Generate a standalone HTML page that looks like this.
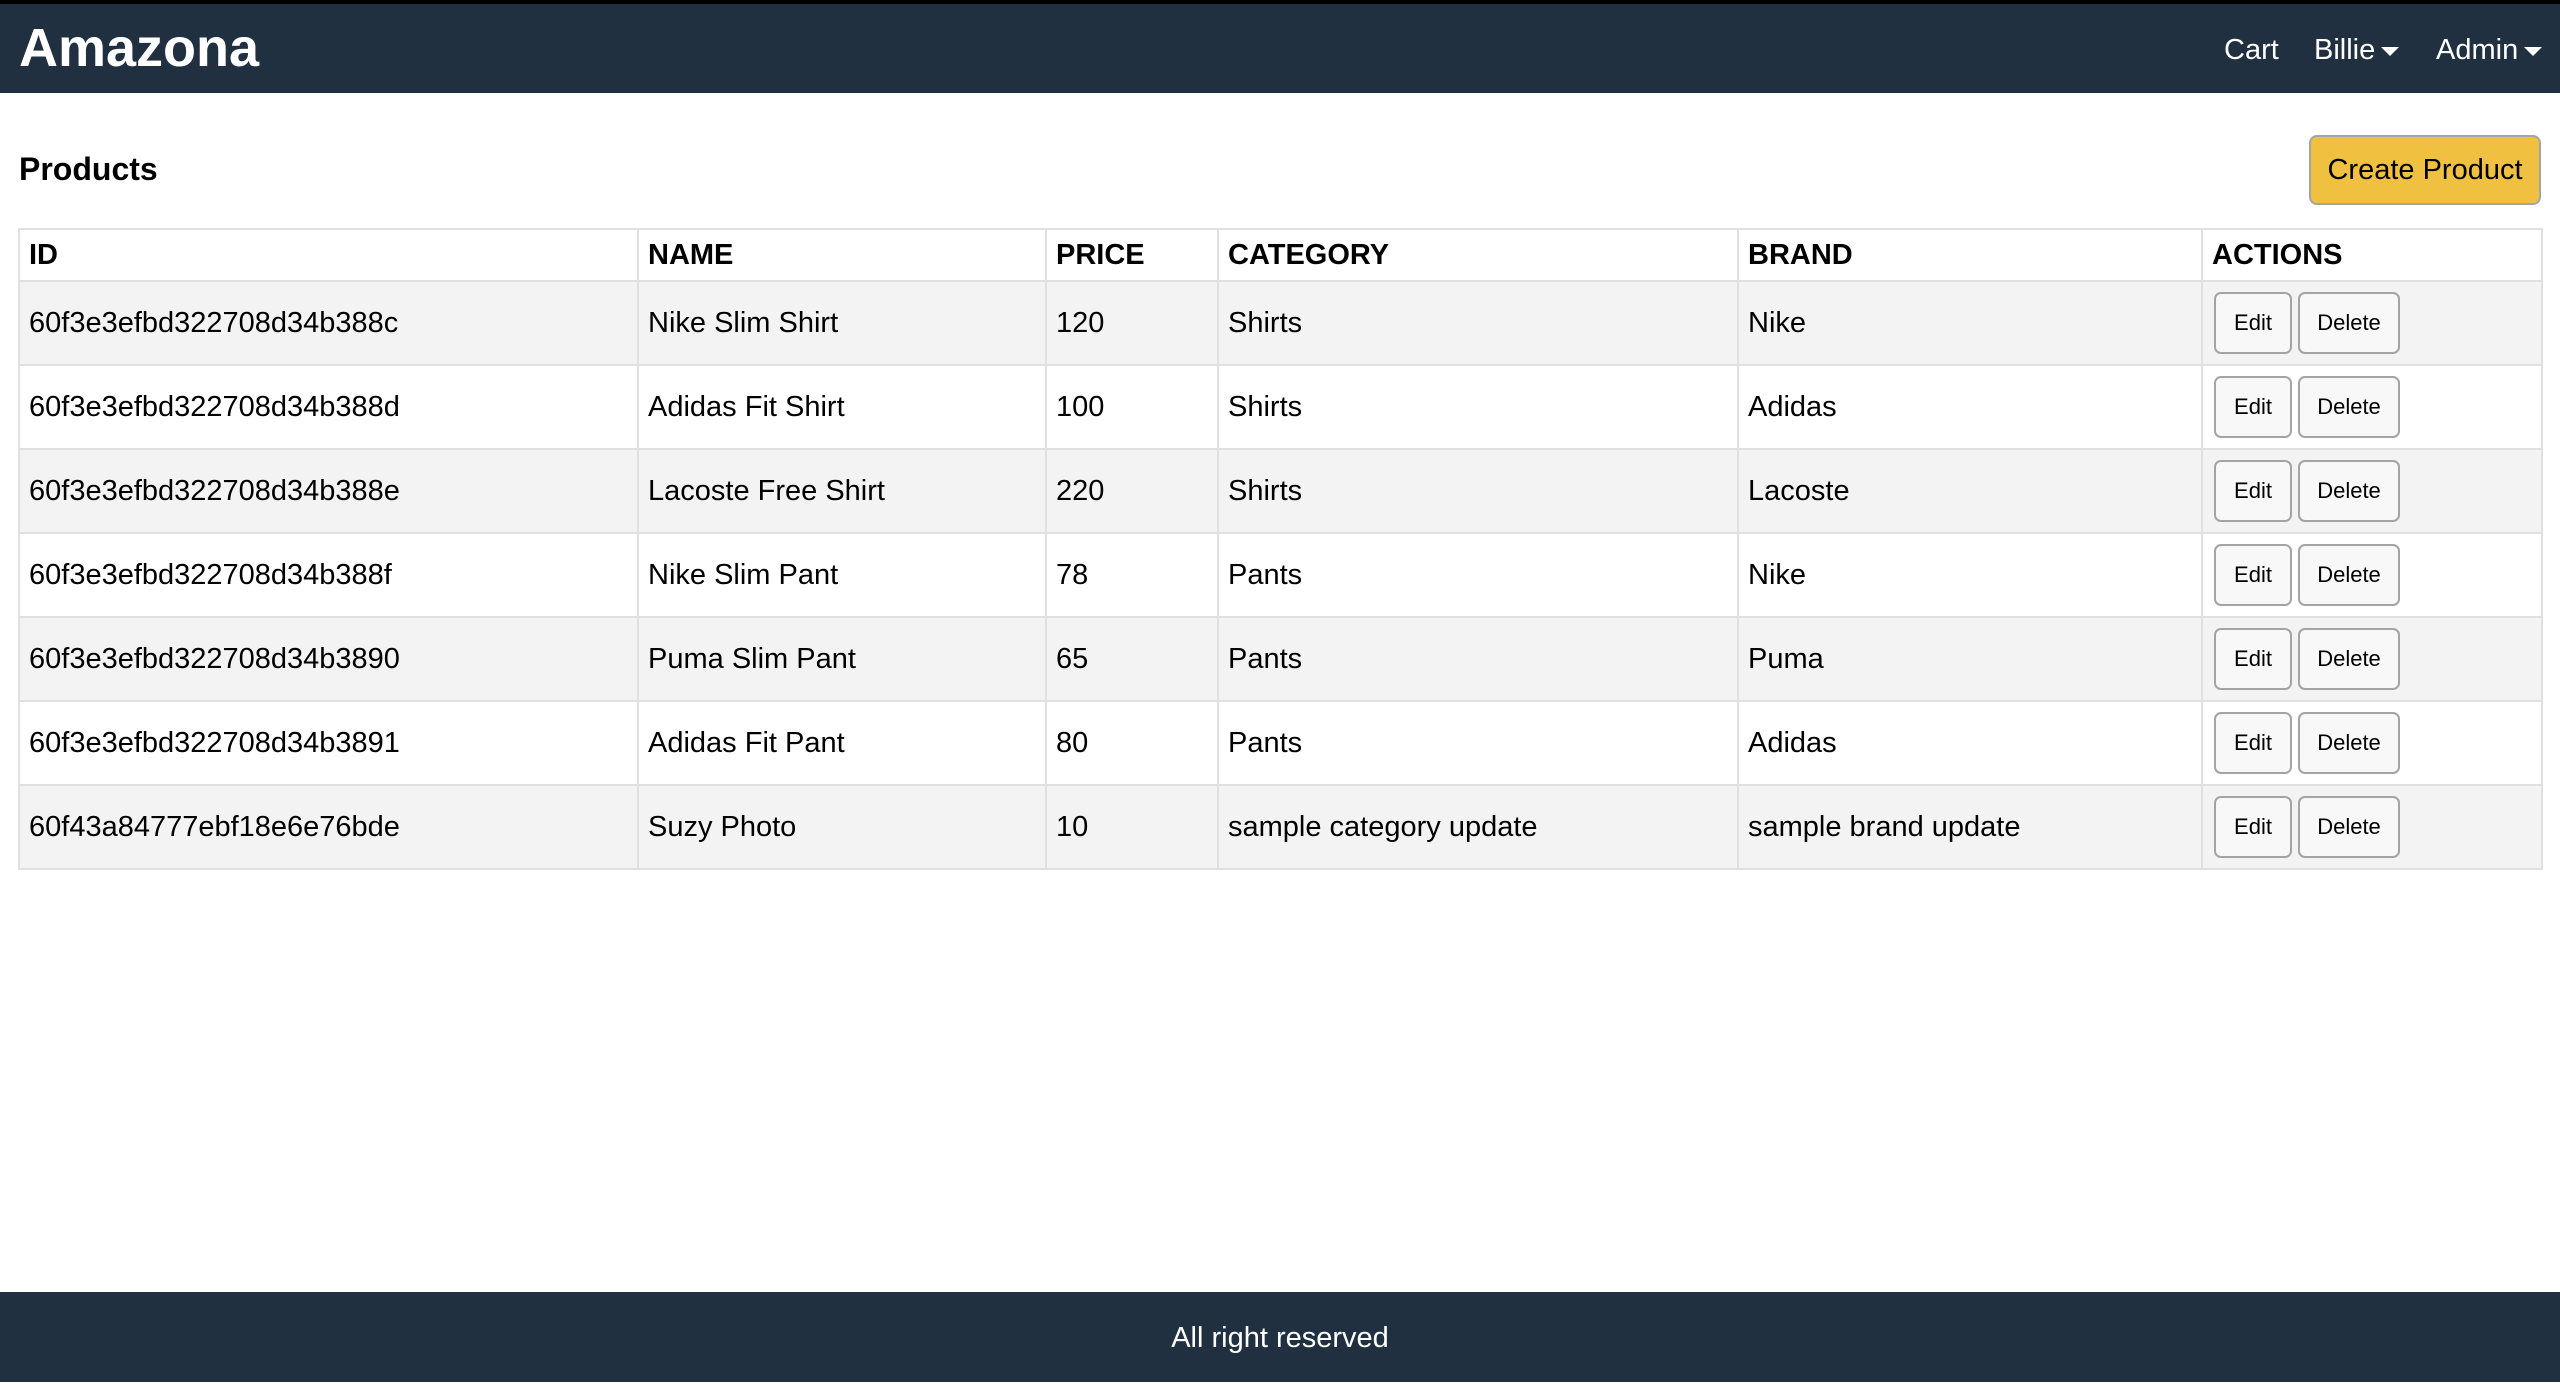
<!DOCTYPE html>
<html><head><meta charset="utf-8"><style>
*{box-sizing:border-box;margin:0;padding:0}
html,body{width:2560px;height:1382px;overflow:hidden;background:#fff;font-family:"Liberation Sans",Arial,sans-serif;color:#000}
.top{position:absolute;left:0;top:0;width:2560px;height:4px;background:#000}
header{position:absolute;left:0;top:4px;width:2560px;height:89px;background:#203040;color:#fff}
.brand{position:absolute;left:19px;top:13px;font-size:54px;font-weight:bold}
.nav{position:absolute;top:30px;font-size:29px}
.caret{display:inline-block;width:0;height:0;border-left:9px solid transparent;border-right:9px solid transparent;border-top:9px solid #fff;vertical-align:middle;margin-left:6px}
h1{position:absolute;left:19px;top:151px;font-size:32px;font-weight:bold}
.create{position:absolute;left:2309px;top:135px;width:232px;height:70px;background:#f0c040;border:2px solid #a4a4a4;border-radius:8px;font-size:29px;line-height:66px;text-align:center}
table{position:absolute;left:18px;top:228px;width:2523px;border-collapse:collapse;table-layout:fixed}
td,th{border:2px solid #e0e0e0;padding:0 9px;font-size:29px;text-align:left;white-space:nowrap}
th{height:52px;font-weight:bold;font-size:29px}
td{height:84px}
tbody tr:nth-child(odd){background:#f3f3f3}
.b{display:inline-block;height:62px;border:2px solid #a4a4a4;border-radius:7px;background:#f8f8f8;font-size:22px;line-height:58px;text-align:center;vertical-align:middle}
.e{width:78px;margin-right:6px;margin-left:2px}.d{width:102px}
footer{position:absolute;left:0;top:1292px;width:2560px;height:90px;background:#203040;color:#fff;font-size:29px;text-align:center;line-height:92px}
</style></head><body>
<div class="top"></div>
<header><div class="brand">Amazona</div>
<div class="nav" style="left:2224px">Cart</div>
<div class="nav" style="left:2314px">Billie<span class="caret"></span></div>
<div class="nav" style="left:2436px">Admin<span class="caret"></span></div></header>
<h1>Products</h1>
<div class="create">Create Product</div>
<table>
<colgroup><col style="width:619px"><col style="width:408px"><col style="width:172px"><col style="width:520px"><col style="width:464px"><col style="width:340px"></colgroup>
<thead><tr><th>ID</th><th>NAME</th><th>PRICE</th><th>CATEGORY</th><th>BRAND</th><th>ACTIONS</th></tr></thead>
<tbody>
<tr><td>60f3e3efbd322708d34b388c</td><td>Nike Slim Shirt</td><td>120</td><td>Shirts</td><td>Nike</td><td><span class="b e">Edit</span><span class="b d">Delete</span></td></tr>
<tr><td>60f3e3efbd322708d34b388d</td><td>Adidas Fit Shirt</td><td>100</td><td>Shirts</td><td>Adidas</td><td><span class="b e">Edit</span><span class="b d">Delete</span></td></tr>
<tr><td>60f3e3efbd322708d34b388e</td><td>Lacoste Free Shirt</td><td>220</td><td>Shirts</td><td>Lacoste</td><td><span class="b e">Edit</span><span class="b d">Delete</span></td></tr>
<tr><td>60f3e3efbd322708d34b388f</td><td>Nike Slim Pant</td><td>78</td><td>Pants</td><td>Nike</td><td><span class="b e">Edit</span><span class="b d">Delete</span></td></tr>
<tr><td>60f3e3efbd322708d34b3890</td><td>Puma Slim Pant</td><td>65</td><td>Pants</td><td>Puma</td><td><span class="b e">Edit</span><span class="b d">Delete</span></td></tr>
<tr><td>60f3e3efbd322708d34b3891</td><td>Adidas Fit Pant</td><td>80</td><td>Pants</td><td>Adidas</td><td><span class="b e">Edit</span><span class="b d">Delete</span></td></tr>
<tr><td>60f43a84777ebf18e6e76bde</td><td>Suzy Photo</td><td>10</td><td>sample category update</td><td>sample brand update</td><td><span class="b e">Edit</span><span class="b d">Delete</span></td></tr>
</tbody></table>
<footer>All right reserved</footer>
</body></html>
